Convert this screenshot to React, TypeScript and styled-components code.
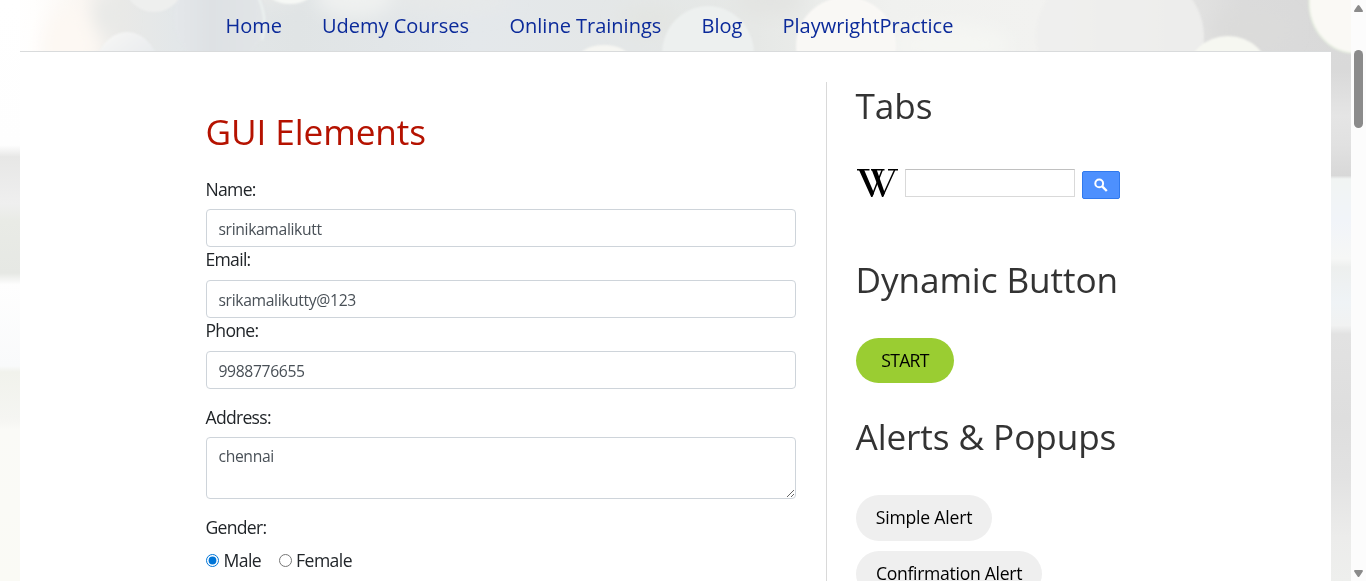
import React from "react";
import styled, { createGlobalStyle } from "styled-components";

const GlobalStyle = createGlobalStyle`
  *, *::before, *::after { box-sizing: border-box; }
  html, body { margin: 0; padding: 0; overflow: hidden; }
  body { background: #fff; color: #212529; font-family: "Open Sans", "Noto Sans", sans-serif; }
`;

const Window = styled.div`
  position: relative;
  display: flex;
  width: 1366px;
  height: 581px;
  overflow: hidden;
`;

const Backdrop = styled.svg`
  position: absolute;
  inset: 0;
  z-index: 0;
`;

const Page = styled.div`
  position: relative;
  z-index: 1;
  flex: 1;
  display: flex;
  flex-direction: column;
  padding: 0 20px;
`;

const Nav = styled.nav`
  flex: none;
  height: 52px;
  display: flex;
  align-items: center;
  gap: 40px;
  padding: 0 0 0 205.5px;
  border-bottom: 1px solid #d9dbdc;
`;

const NavLink = styled.a<{ $w: number }>`
  width: ${(p) => p.$w}px;
  font-size: 20px;
  line-height: 26px;
  letter-spacing: -0.01px;
  white-space: nowrap;
  color: #0b2a9a;
  text-decoration: none;
`;

const Main = styled.main`
  flex: 1;
  min-height: 0;
  display: flex;
  background: #fff;
  padding: 30px 0 0 186px;
`;

const FormColumn = styled.section`
  width: 620px;
  padding: 27px 30px 0 0;
`;

const Sidebar = styled.aside`
  flex: 1;
  border-left: 1px solid #d9d9d9;
  padding: 1px 0 0 29px;
`;

const Heading = styled.h2<{ $color?: string; $top?: number; $bottom?: number }>`
  margin: ${(p) => p.$top ?? 0}px 0 ${(p) => p.$bottom ?? 0}px -0.5px;
  font-size: 35.2px;
  font-weight: 400;
  line-height: 44px;
  letter-spacing: -0.1px;
  white-space: nowrap;
  color: ${(p) => p.$color ?? "#333"};
`;

const Field = styled.div<{ $gap?: number }>`
  display: flex;
  flex-direction: column;
  margin-bottom: ${(p) => p.$gap ?? 0}px;
`;

const Label = styled.label<{ $line?: number }>`
  height: 33px;
  margin-left: -0.5px;
  font-size: 17.6px;
  line-height: ${(p) => p.$line ?? 26}px;
  letter-spacing: -0.72px;
`;

const Input = styled.input`
  width: 590px;
  height: 38px;
  padding: 1px 11.5px 0;
  border: 1px solid #ced4da;
  border-radius: 4px;
  background: #fff;
  font: 15.7px "Open Sans", sans-serif;
  letter-spacing: -0.36px;
  color: #495057;
  outline: none;
`;

const TextArea = styled.textarea`
  width: 590px;
  height: 62px;
  padding: 6px 11.5px;
  border: 1px solid #ced4da;
  border-radius: 4px;
  background: #fff;
  font: 15.7px/24px "Open Sans", sans-serif;
  letter-spacing: -0.36px;
  color: #495057;
  outline: none;
  resize: vertical;
`;

const RadioRow = styled.div`
  display: flex;
  align-items: center;
  gap: 17.5px;
`;

const RadioLabel = styled.label`
  display: flex;
  align-items: center;
  gap: 4.5px;
  font-size: 17.6px;
  line-height: 25px;
  letter-spacing: -0.58px;
`;

const Radio = styled.input`
  width: 13px;
  height: 13px;
  margin: 0;
  accent-color: #0075d7;
`;

const SearchRow = styled.div`
  display: flex;
  height: 30px;
  margin-top: 42px;
`;

const WikiLogo = styled.svg`
  width: 42px;
  height: 30px;
`;

const SearchInput = styled.input`
  width: 170px;
  height: 28px;
  margin-left: 7px;
  border: 1px solid #d9d9d9;
  border-top-color: #c0c0c0;
  outline: none;
`;

const SearchButton = styled.button`
  display: flex;
  align-items: center;
  justify-content: center;
  width: 38px;
  height: 28px;
  margin: 2px 0 0 7px;
  padding: 0;
  border: 1px solid #3079ed;
  border-radius: 2px;
  background: #4d90fe;
`;

const Pill = styled.button<{ $w: number; $h: number; $bg: string; $top: number; $track: number }>`
  display: block;
  width: ${(p) => p.$w}px;
  height: ${(p) => p.$h}px;
  margin-top: ${(p) => p.$top}px;
  padding: 0 0 2px;
  border: 0;
  border-radius: 23px;
  background: ${(p) => p.$bg};
  font: 17.6px "Open Sans", sans-serif;
  letter-spacing: ${(p) => p.$track}px;
  white-space: nowrap;
  color: #000;
`;

const Scrollbar = styled.div`
  position: relative;
  z-index: 1;
  width: 15px;
  display: flex;
  flex-direction: column;
  align-items: center;
  padding: 5px 1px 4px 0;
  background: #fcfcfc;
`;

const Thumb = styled.div`
  width: 9px;
  height: 78px;
  margin: 38px 0 auto;
  border-radius: 5px;
  background: #8b8b8b;
`;

const Arrow = styled.svg`
  width: 9px;
  height: 7px;
  fill: #8b8b8b;
`;

const links: [string, number][] = [
  ["Home", 56.5],
  ["Udemy Courses", 147.5],
  ["Online Trainings", 152],
  ["Blog", 41],
  ["PlaywrightPractice", 171],
];

const fields = [
  { label: "Name:", value: "srinikamalikutt", line: 26 },
  { label: "Email:", value: "srikamalikutty@123", line: 24 },
  { label: "Phone:", value: "9988776655", line: 24 },
];

function Bokeh() {
  return (
    <Backdrop width="1366" height="581" viewBox="0 0 1366 581">
      <defs>
        <linearGradient id="base" x1="0" x2="1">
          <stop offset="0" stopColor="#fff" />
          <stop offset="0.025" stopColor="#fffefd" />
          <stop offset="0.06" stopColor="#faf6f2" />
          <stop offset="0.09" stopColor="#e9e9e7" />
          <stop offset="0.13" stopColor="#e3e7e9" />
          <stop offset="0.22" stopColor="#e0e4e5" />
          <stop offset="0.35" stopColor="#e4e8eb" />
          <stop offset="0.47" stopColor="#e4e7e7" />
          <stop offset="0.56" stopColor="#e6e8e6" />
          <stop offset="0.66" stopColor="#f0f1ef" />
          <stop offset="0.77" stopColor="#f2f2f0" />
          <stop offset="0.87" stopColor="#e4e4e3" />
          <stop offset="0.92" stopColor="#dbdbdb" />
          <stop offset="1" stopColor="#d9d9d9" />
        </linearGradient>
        <linearGradient id="left" x1="0" x2="0" y1="0" y2="1">
          <stop offset="0" stopColor="#fff" />
          <stop offset="0.25" stopColor="#fefefe" />
          <stop offset="0.27" stopColor="#e7e7e6" />
          <stop offset="0.35" stopColor="#efefef" />
          <stop offset="0.38" stopColor="#e9ebe6" />
          <stop offset="0.47" stopColor="#e6e8e4" />
          <stop offset="0.49" stopColor="#fefefe" />
          <stop offset="0.63" stopColor="#f9fafb" />
          <stop offset="0.64" stopColor="#f1f2ec" />
          <stop offset="0.72" stopColor="#f5f5f2" />
          <stop offset="0.74" stopColor="#fafaf7" />
          <stop offset="1" stopColor="#fafaf5" />
        </linearGradient>
        <linearGradient id="right" x1="0" x2="0" y1="0" y2="1">
          <stop offset="0" stopColor="#dadada" />
          <stop offset="0.12" stopColor="#d9d9d9" />
          <stop offset="0.2" stopColor="#e5e5e5" />
          <stop offset="0.25" stopColor="#e1e1e1" />
          <stop offset="0.302" stopColor="#d8d8d8" />
          <stop offset="0.308" stopColor="#f1f4f3" />
          <stop offset="0.38" stopColor="#f1f4f9" />
          <stop offset="0.445" stopColor="#f6f7f6" />
          <stop offset="0.46" stopColor="#edefee" />
          <stop offset="0.52" stopColor="#eff3f6" />
          <stop offset="0.56" stopColor="#f1f2f2" />
          <stop offset="0.575" stopColor="#e2e2e2" />
          <stop offset="0.72" stopColor="#dedede" />
          <stop offset="0.82" stopColor="#e2e2e2" />
          <stop offset="0.925" stopColor="#ececeb" />
          <stop offset="1" stopColor="#eeefed" />
        </linearGradient>
        <linearGradient id="lilac" x1="0" x2="0.6" y1="0" y2="1">
          <stop offset="0" stopColor="#f9f8f6" />
          <stop offset="0.6" stopColor="#e8ebee" />
        </linearGradient>
        <linearGradient id="disc" x1="0" x2="1">
          <stop offset="0" stopColor="#e4e7ea" />
          <stop offset="0.4" stopColor="#dee1e4" />
          <stop offset="1" stopColor="#e2e5e7" />
        </linearGradient>
        <filter id="soft" x="-20%" y="-20%" width="140%" height="140%">
          <feGaussianBlur stdDeviation="1.3" />
        </filter>
        <filter id="wide" x="-50%" y="-50%" width="200%" height="200%">
          <feGaussianBlur stdDeviation="9" />
        </filter>
      </defs>
      <rect width="1351" height="52" fill="url(#base)" />
      <rect width="20" height="581" fill="url(#left)" />
      <rect x="1331" width="20" height="581" fill="url(#right)" />
      <g filter="url(#wide)">
        <ellipse cx="70" cy="48" rx="28" ry="40" fill="#fdf8f3" />
        <ellipse cx="108" cy="16" rx="14" ry="20" fill="#e8e9e7" />
        <ellipse cx="240" cy="-6" rx="60" ry="12" fill="#e8e9e8" />
        <ellipse cx="355" cy="-4" rx="40" ry="22" fill="#eff1f0" />
        <ellipse cx="450" cy="0" rx="60" ry="12" fill="#e7e9e9" />
        <ellipse cx="650" cy="20" rx="30" ry="14" fill="#e3e5e2" />
        <ellipse cx="770" cy="0" rx="35" ry="16" fill="#e3e4e2" />
        <ellipse cx="950" cy="45" rx="60" ry="20" fill="#f5f6f3" />
        <ellipse cx="1250" cy="30" rx="40" ry="20" fill="#dbdbda" />
      </g>
      <g filter="url(#soft)">
        <ellipse cx="154" cy="-22" rx="32" ry="34" fill="#eeefee" />
        <ellipse cx="127" cy="74" rx="33" ry="42" fill="url(#lilac)" />
        <circle cx="220" cy="18" r="46" fill="url(#disc)" />
        <path d="M256 -8Q269 18 262 40" stroke="#edf3f1" strokeWidth="2" fill="none" />
        <ellipse cx="290" cy="-14" rx="26" ry="18" fill="#f6f8f5" />
        <ellipse cx="604" cy="62" rx="28" ry="17" fill="#f6f6f2" />
        <ellipse cx="708" cy="54" rx="46" ry="48" fill="#edf0ef" />
        <ellipse cx="846" cy="46" rx="50" ry="49" fill="#f9f8f5" />
        <ellipse cx="1120" cy="36" rx="84" ry="72" fill="#efefed" opacity="0.85" />
        <ellipse cx="1228" cy="76" rx="42" ry="40" fill="#f6f7f1" />
        <ellipse cx="1354" cy="2" rx="45" ry="51" fill="#faf9f5" stroke="#e5eddf" strokeWidth="1.5" />
      </g>
    </Backdrop>
  );
}

export default function App() {
  return (
    <>
      <GlobalStyle />
      <Window>
        <Bokeh />
        <Page>
          <Nav>
            {links.map(([text, w]) => (
              <NavLink key={text} $w={w}>{text}</NavLink>
            ))}
          </Nav>
          <Main>
            <FormColumn>
              <Heading $color="#b51200" $bottom={23}>GUI Elements</Heading>
              {fields.map((f, i) => (
                <Field key={f.label} $gap={i === 2 ? 15 : 0}>
                  <Label $line={f.line}>{f.label}</Label>
                  <Input defaultValue={f.value} />
                </Field>
              ))}
              <Field $gap={16}>
                <Label>Address:</Label>
                <TextArea defaultValue="chennai" />
              </Field>
              <Field>
                <Label $line={24}>Gender:</Label>
                <RadioRow>
                  <RadioLabel><Radio type="radio" name="gender" defaultChecked />Male</RadioLabel>
                  <RadioLabel><Radio type="radio" name="gender" />Female</RadioLabel>
                </RadioRow>
              </Field>
            </FormColumn>
            <Sidebar>
              <Heading>Tabs</Heading>
              <SearchRow>
                <WikiLogo viewBox="0 0 42 30" fill="none" stroke="#000">
                  <path d="M1 .8H13.5M15 .8H28.5M32 .8H42" strokeWidth="1.4" />
                  <path d="M3 1H8.2L18 24 16.4 28H15.2ZM15.8 1H20.8L28.8 24 27.2 28H26Z" fill="#000" stroke="none" />
                  <path d="M16 27L26.2 1M26.8 27L38.6 1" strokeWidth="1.5" />
                </WikiLogo>
                <SearchInput />
                <SearchButton>
                  <svg width="14" height="14" viewBox="0 0 14 14" fill="none" stroke="#fff">
                    <circle cx="5.2" cy="5.4" r="3.9" strokeWidth="2" />
                    <path d="M8.2 8.4L12.8 13" strokeWidth="2.4" />
                  </svg>
                </SearchButton>
              </SearchRow>
              <Heading $top={58}>Dynamic Button</Heading>
              <Pill $w={98} $h={45} $bg="#9acd32" $top={37} $track={-0.7}>START</Pill>
              <Heading $top={31}>Alerts &amp; Popups</Heading>
              <Pill $w={136} $h={46} $bg="#efefef" $top={37} $track={-0.2}>Simple Alert</Pill>
              <Pill $w={186} $h={46} $bg="#efefef" $top={10} $track={-0.3}>Confirmation Alert</Pill>
            </Sidebar>
          </Main>
        </Page>
        <Scrollbar>
          <Arrow viewBox="0 0 9 7"><path d="M4.5 0Q5 0 5.4.6L8.8 5.5Q9.2 7 8 7H1Q-.2 7 .2 5.5L3.6.6Q4 0 4.5 0Z" /></Arrow>
          <Thumb />
          <Arrow viewBox="0 0 9 7"><path d="M4.5 7Q5 7 5.4 6.4L8.8 1.5Q9.2 0 8 0H1Q-.2 0 .2 1.5L3.6 6.4Q4 7 4.5 7Z" /></Arrow>
        </Scrollbar>
      </Window>
    </>
  );
}
